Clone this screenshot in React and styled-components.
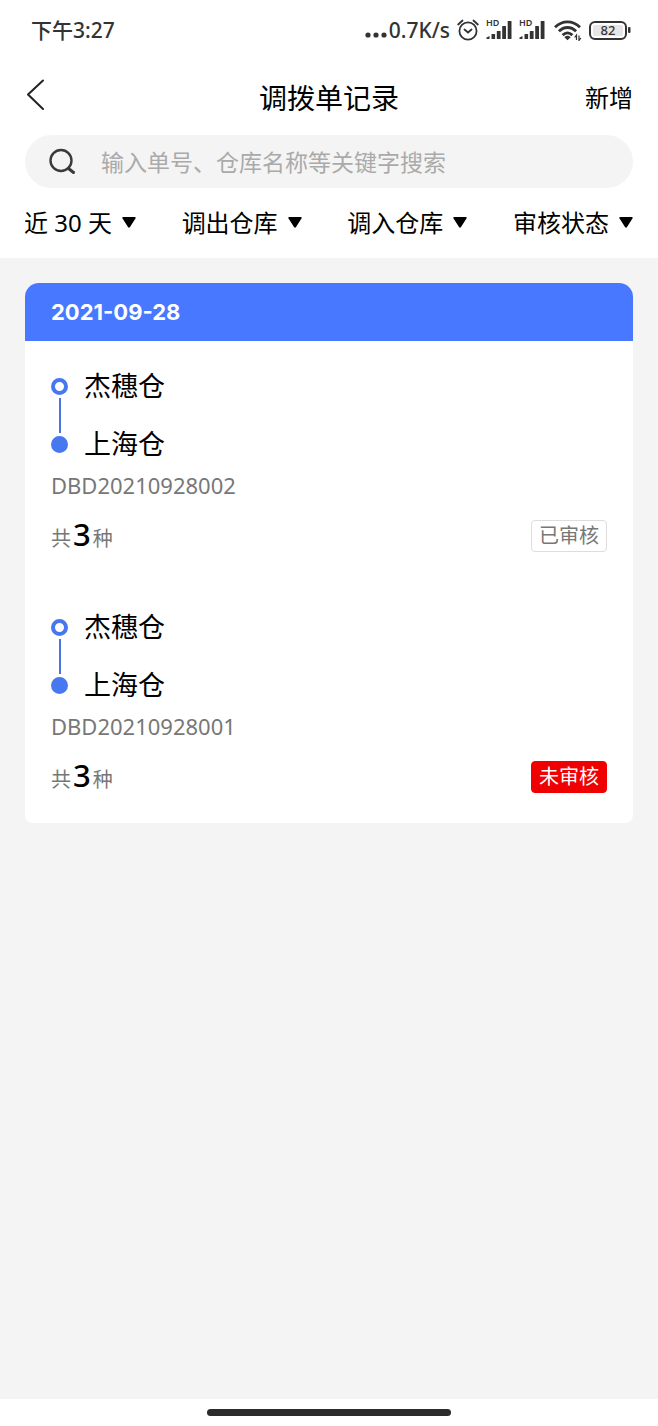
import React, { useState } from "react";
import styled, { createGlobalStyle } from "styled-components";

const records = [
    { id: 'DBD20210928002', from: '杰穗仓', to: '上海仓', count: 3, audited: true },
    { id: 'DBD20210928001', from: '杰穗仓', to: '上海仓', count: 3, audited: false },
];

const filters = [
    { name: '时间', value: '近 30 天' },
    { name: '调出仓库', value: '调出仓库' },
    { name: '调入仓库', value: '调入仓库' },
    { name: '审核状态', value: '审核状态' },
];

function Signal() {
    return (
        <SignalWrapper>
            <SignalLabel>HD</SignalLabel>
            <svg width="26" height="19" viewBox="0 0 26 19" fill="#333">
                <path d="M.5 18v-1.500l3-1.500v3z" />
                <rect x="5.500" y="13" width="3.600" height="5" rx=".5" />
                <rect x="10.800" y="10" width="3.800" height="8" rx=".5" />
                <rect x="16.200" y="5" width="3.800" height="13" rx=".5" />
                <rect x="21.700" y="0" width="3.800" height="18" rx=".5" />
            </svg>
        </SignalWrapper>
    );
}

function StatusBar() {
    return (
        <StatusWrapper>
            <span>下午3:27</span>
            <StatusIcons>
                <Speed>
                    <svg width="22" height="6" viewBox="0 0 22 6" fill="#333">
                        <circle cx="3" cy="3" r="2.6" />
                        <circle cx="11" cy="3" r="2.6" />
                        <circle cx="19" cy="3" r="2.6" />
                    </svg>
                    <span>0.7K/s</span>
                </Speed>
                <svg width="22" height="22" viewBox="0 0 22 22" fill="none" stroke="#333" strokeWidth="1.8" strokeLinecap="round">
                    <circle cx="11" cy="12" r="8.6" />
                    <path d="M7.5 10.5l3.5 3 3.5-3M1.2 5.5L5.5 1.5M20.8 5.5L16.500 1.500" />
                </svg>
                <Signal />
                <Signal />
                <svg width="30" height="21" viewBox="-2 0 30 21" fill="none" stroke="#333" strokeWidth="2.8">
                    <path d="M1 7.200C8.500 0 18.500 0 26 7.200" />
                    <path d="M4.900 11.300C10 6.200 17 6.200 22.100 11.300" />
                    <path d="M8.600 15.100C12 12 15 12 18.400 15.100" />
                    <path d="M10.300 17.200C12.500 15.300 14.500 15.300 16.700 17.200L13.500 20.200z" fill="#333" stroke="none" />
                    <path d="M22.500 20v-5l-1.800 2.500M25 15.500v5l1.800-2.500" strokeWidth="1.2" />
                </svg>
                <Battery>
                    <BatteryLevel>82</BatteryLevel>
                    <svg width="3" height="6" viewBox="0 0 3 6" fill="#333">
                        <rect width="2.500" height="6" rx="1" />
                    </svg>
                </Battery>
            </StatusIcons>
        </StatusWrapper>
    );
}

function Filter({ name, value }) {
    return (
        <FilterWrapper>
            <select aria-label={name}>
                <option>{value}</option>
            </select>
            <svg width="14" height="11" viewBox="0 0 14 11">
                <path d="M1.500 0h11q2 0 .8 1.800L8 10q-1 1.300-2 0L.7 1.800Q-.5 0 1.500 0z" />
            </svg>
        </FilterWrapper>
    );
}

function Record({ record }) {
    return (
        <RecordWrapper>
            <Route>
                <Track>
                    <Dot $hollow />
                    <Line />
                    <Dot />
                </Track>
                <Stops>
                    <span>{record.from}</span>
                    <span>{record.to}</span>
                </Stops>
            </Route>
            <OrderNo>{record.id}</OrderNo>
            <RecordFooter>
                <Count>共<b>{record.count}</b>种</Count>
                <Tag $audited={record.audited}>{record.audited ? '已审核' : '未审核'}</Tag>
            </RecordFooter>
        </RecordWrapper>
    );
}

export default function App() {
    const [keyword, setKeyword] = useState("");

    return (
        <Page>
            <GlobalStyle />
            <Top>
                <StatusBar />
                <Header>
                    <HeaderSide>
                        <HeaderButton aria-label="返回">
                            <svg width="20" height="38" viewBox="0 0 20 38" fill="none" stroke="#222" strokeWidth="2" strokeLinecap="round" strokeLinejoin="round">
                                <path d="M18 1.500L3 15.500l15 14.500" />
                            </svg>
                        </HeaderButton>
                    </HeaderSide>
                    <h1>调拨单记录</h1>
                    <HeaderSide $end>
                        <HeaderButton>新增</HeaderButton>
                    </HeaderSide>
                </Header>
                <SearchBar>
                    <svg width="27" height="27" viewBox="0 0 27 27" fill="none" stroke="#3a3a3a" strokeWidth="2.400" strokeLinecap="round">
                        <circle cx="12" cy="12.500" r="10.500" />
                        <path d="M19.500 20.500l5 4" strokeWidth="3" />
                    </svg>
                    <input
                        type="text"
                        aria-label="搜索"
                        placeholder="输入单号、仓库名称等关键字搜索"
                        value={keyword}
                        onChange={(e) => setKeyword(e.target.value)} />
                </SearchBar>
                <Filters>
                    {filters.map((f) => <Filter key={f.name} {...f} />)}
                </Filters>
            </Top>
            <Content>
                <Card>
                    <CardHeader>2021-09-28</CardHeader>
                    {records.map((r) => <Record key={r.id} record={r} />)}
                </Card>
            </Content>
            <BottomBar>
                <HomeIndicator />
            </BottomBar>
        </Page>
    );
}

const GlobalStyle = createGlobalStyle`
    * {
        box-sizing: border-box;
    }

    body {
        margin: 0;
        background-color: #f4f4f4;
    }

    body, button, input, select {
        font-family: "Noto Sans", "Noto Sans CJK SC", sans-serif;
        color: #000;
    }

    svg {
        display: block;
        flex-shrink: 0;
    }
`

const Page = styled.div`
    min-height: 100vh;
    display: flex;
    flex-direction: column;
`

const Top = styled.div`
    background-color: #fff;
    padding-bottom: 17px;
`

const StatusWrapper = styled.div`
    display: flex;
    align-items: center;
    justify-content: space-between;
    height: 60px;
    padding: 0 27px 0 31px;
    font-size: 21px;
    line-height: 28px;
    font-weight: 500;
    color: #333;
`

const StatusIcons = styled.div`
    display: flex;
    align-items: center;
    gap: 7px;
`

const Speed = styled.div`
    display: flex;
    align-items: center;
    gap: 2px;

    svg {
        margin-top: 10px;
    }
`

const SignalWrapper = styled.div`
    position: relative;
`

const SignalLabel = styled.span`
    position: absolute;
    top: -3px;
    left: 0;
    font-size: 9px;
    line-height: 10px;
    font-weight: 600;
`

const Battery = styled.div`
    display: flex;
    align-items: center;
    gap: 1px;
`

const BatteryLevel = styled.span`
    width: 38px;
    height: 19px;
    border: 2px solid #333;
    border-radius: 6px;
    background-color: #e6e6e6;
    box-shadow: inset 0 0 0 2px #fff;
    font-size: 13px;
    line-height: 15px;
    text-align: center;
`

const Header = styled.header`
    display: flex;
    align-items: center;
    height: 75px;
    padding: 0 25px;

    h1 {
        margin: 0;
        font-size: 28px;
        font-weight: 400;
        line-height: 40px;
    }
`

const HeaderSide = styled.div`
    flex: 1;
    display: flex;
    justify-content: ${(props) => props.$end ? 'flex-end' : 'flex-start'};
`

const HeaderButton = styled.button`
    border: none;
    background: transparent;
    padding: 0;
    font-size: 24px;
    line-height: 36px;
`

const SearchBar = styled.label`
    display: flex;
    align-items: center;
    gap: 25px;
    height: 53px;
    margin: 0 25px;
    padding: 0 24px;
    border-radius: 27px;
    background-color: #f4f4f4;

    input {
        flex: 1;
        min-width: 0;
        border: none;
        outline: none;
        padding: 0;
        background: transparent;
        font-size: 23px;
        line-height: 36px;
    }

    input::placeholder {
        color: #aaa;
    }
`

const Filters = styled.div`
    display: flex;
    justify-content: space-between;
    margin-top: 17px;
    padding: 0 25px 0 24px;
`

const FilterWrapper = styled.div`
    position: relative;

    select {
        appearance: none;
        field-sizing: content;
        display: block;
        border: none;
        outline: none;
        background: transparent;
        padding: 0 24px 0 0;
        font-size: 24px;
        line-height: 36px;
    }

    svg {
        position: absolute;
        right: 0;
        top: 12px;
        pointer-events: none;
    }
`

const Content = styled.main`
    flex: 1;
    padding: 25px;
`

const Card = styled.section`
    border-radius: 14px 14px 8px 8px;
    background-color: #fff;
    overflow: hidden;
`

const CardHeader = styled.h2`
    margin: 0;
    padding: 0 26px;
    background-color: #4878ff;
    color: #fff;
    font-family: Inter, sans-serif;
    font-size: 22px;
    font-weight: 700;
    line-height: 58px;
`

const RecordWrapper = styled.article`
    padding: 28px 26px 30px;
`

const Route = styled.div`
    display: flex;
    align-items: center;
    gap: 16px;
`

const Track = styled.div`
    display: flex;
    flex-direction: column;
    align-items: center;
    gap: 3px;
`

const Dot = styled.span`
    width: 17px;
    height: 17px;
    border: 4px solid #4878f0;
    border-radius: 50%;
    background-color: ${(props) => props.$hollow ? '#fff' : '#4878f0'};
`

const Line = styled.span`
    width: 2px;
    height: 35px;
    background-color: #4a74d8;
`

const Stops = styled.div`
    display: flex;
    flex-direction: column;
    gap: 24px;
    font-size: 27px;
    line-height: 34px;
`

const OrderNo = styled.div`
    margin-top: 10px;
    font-size: 22px;
    line-height: 28px;
    color: #777;
`

const RecordFooter = styled.div`
    display: flex;
    align-items: center;
    justify-content: space-between;
    margin-top: 20px;
`

const Count = styled.div`
    padding-top: 5px;
    font-size: 20px;
    line-height: 26px;
    color: #777;

    b {
        padding: 0 2px;
        font-size: 31px;
        font-weight: 500;
        line-height: 20px;
        color: #000;
    }
`

const Tag = styled.span`
    padding: 0 7px;
    border: 1px solid ${(props) => props.$audited ? '#ddd' : '#f00000'};
    border-radius: 4px;
    background-color: ${(props) => props.$audited ? '#fff' : '#f00000'};
    color: ${(props) => props.$audited ? '#777' : '#fff'};
    font-size: 20px;
    line-height: 30px;
`

const BottomBar = styled.footer`
    display: flex;
    justify-content: center;
    padding: 10px 0;
    background-color: #fff;
`

const HomeIndicator = styled.div`
    width: 37%;
    height: 7px;
    border-radius: 4px;
    background-color: #2c2c2c;
`
